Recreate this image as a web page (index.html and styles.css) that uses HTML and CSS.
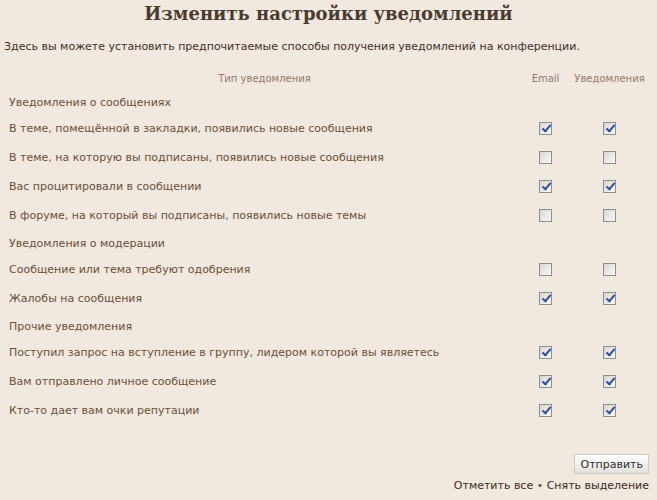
FILE: index.html
```html
<!DOCTYPE html>
<html lang="ru">
<head>
<meta charset="utf-8">
<title>Изменить настройки уведомлений</title>
<link rel="stylesheet" href="styles.css">
</head>
<body>
<div class="page">
  <h2 class="title">Изменить настройки уведомлений</h2>
  <p class="intro">Здесь вы можете установить предпочитаемые способы получения уведомлений на конференции.</p>
  <table class="prefs">
    <thead>
      <tr><th class="c-type">Тип уведомления</th><th class="c-email">Email</th><th class="c-notif">Уведомления</th></tr>
    </thead>
    <tbody>
      <tr class="group"><td colspan="3">Уведомления о сообщениях</td></tr>
      <tr><td>В теме, помещённой в закладки, появились новые сообщения</td><td class="c-email"><span class="cb on"></span></td><td class="c-notif"><span class="cb on"></span></td></tr>
      <tr><td>В теме, на которую вы подписаны, появились новые сообщения</td><td class="c-email"><span class="cb"></span></td><td class="c-notif"><span class="cb"></span></td></tr>
      <tr><td>Вас процитировали в сообщении</td><td class="c-email"><span class="cb on"></span></td><td class="c-notif"><span class="cb on"></span></td></tr>
      <tr><td>В форуме, на который вы подписаны, появились новые темы</td><td class="c-email"><span class="cb"></span></td><td class="c-notif"><span class="cb"></span></td></tr>
      <tr class="group"><td colspan="3">Уведомления о модерации</td></tr>
      <tr><td>Сообщение или тема требуют одобрения</td><td class="c-email"><span class="cb"></span></td><td class="c-notif"><span class="cb"></span></td></tr>
      <tr><td>Жалобы на сообщения</td><td class="c-email"><span class="cb on"></span></td><td class="c-notif"><span class="cb on"></span></td></tr>
      <tr class="group"><td colspan="3">Прочие уведомления</td></tr>
      <tr><td>Поступил запрос на вступление в группу, лидером которой вы являетесь</td><td class="c-email"><span class="cb on"></span></td><td class="c-notif"><span class="cb on"></span></td></tr>
      <tr><td>Вам отправлено личное сообщение</td><td class="c-email"><span class="cb on"></span></td><td class="c-notif"><span class="cb on"></span></td></tr>
      <tr><td>Кто-то дает вам очки репутации</td><td class="c-email"><span class="cb on"></span></td><td class="c-notif"><span class="cb on"></span></td></tr>
    </tbody>
  </table>
  <div class="actions">
    <button class="btn" type="button">Отправить</button>
    <div class="marks"><a href="#">Отметить все</a> • <a href="#">Снять выделение</a></div>
  </div>
</div>
</body>
</html>
```
FILE: styles.css
```css
html, body {
  margin: 0;
  padding: 0;
  background: #f1e8df;
}
body {
  font-family: "DejaVu Sans", Verdana, sans-serif;
  font-size: 11px;
  color: #6a5139;
}
.page {
  padding: 0 4px;
}
.title {
  margin: 0;
  padding-top: 3px;
  text-align: center;
  font-family: "DejaVu Serif", Georgia, serif;
  font-weight: bold;
  font-size: 18px;
  line-height: 22px;
  color: #4a3c30;
}
.intro {
  margin: 15px 0 0 0;
  line-height: 14px;
  color: #3f3126;
}
.prefs {
  width: 100%;
  margin-top: 16px;
  border-collapse: collapse;
  table-layout: fixed;
}
.prefs th {
  font-weight: normal;
  font-size: 10px;
  color: #8c7b6e;
  padding: 2px 0 3px 0;
  line-height: 14px;
  text-align: center;
  vertical-align: middle;
}
.prefs td {
  padding: 0 5px;
  height: 29px;
  line-height: 14px;
  vertical-align: middle;
}
.prefs .group td {
  height: auto;
  padding: 7px 5px 4px;
}
.prefs .c-email {
  width: 41px;
}
.prefs .c-notif {
  width: 87px;
}
.prefs td.c-email,
.prefs td.c-notif {
  padding: 0;
  text-align: center;
}
.cb {
  display: inline-block;
  width: 11px;
  height: 11px;
  border: 1px solid #8e8e8e;
  background: linear-gradient(135deg, #d6d5d0 0%, #ecebe7 55%, #fbfbfa 100%);
  vertical-align: middle;
  position: relative;
}
.cb.on::after {
  content: "";
  position: absolute;
  left: 4px;
  top: 0px;
  width: 3px;
  height: 7px;
  border: solid #2f4fa3;
  border-width: 0 2px 2px 0;
  transform: rotate(40deg);
}
.actions {
  display: flex;
  flex-direction: column;
  align-items: flex-end;
  margin-top: 29px;
  padding-right: 4px;
}
.btn {
  font-family: "DejaVu Sans", Verdana, sans-serif;
  font-size: 11px;
  color: #2e2e2e;
  height: 20px;
  padding: 0 5px;
  border: 1px solid #d3cbc2;
  background: linear-gradient(#ffffff, #e4e1dd);
}
.marks {
  margin-top: 5px;
  line-height: 14px;
}
.marks a {
  color: #3a2d22;
  text-decoration: none;
}
```
